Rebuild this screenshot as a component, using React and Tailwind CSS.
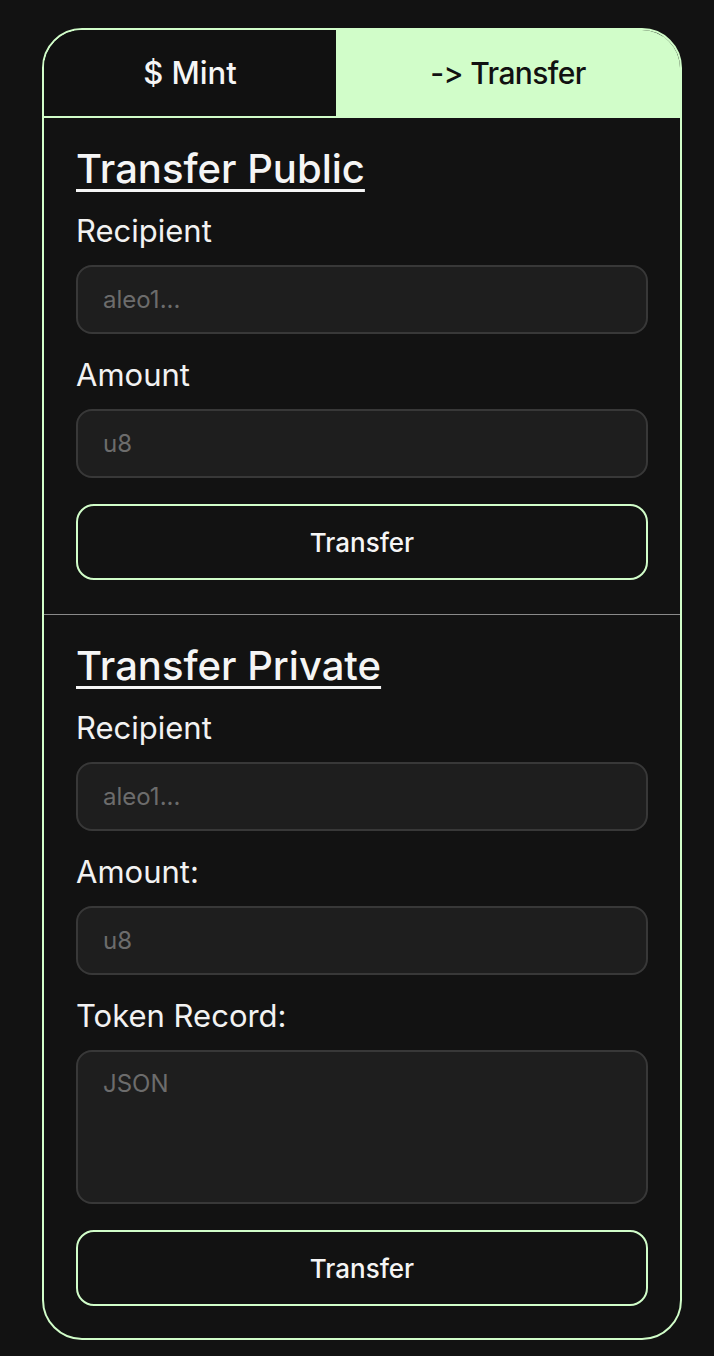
import React from "react";

const font = { fontFamily: "Inter, 'Liberation Sans', sans-serif", fontFeatureSettings: "'calt' 0" };

function Field({ label, placeholder, first, textarea }) {
  return (
    <>
      <label className={`block text-[31px] leading-[36px] text-[#f2f2f2] ${first ? "mt-[18px]" : "mt-[23px]"} mb-[16px]`}>
        {label}
      </label>
      {textarea ? (
        <textarea
          placeholder={placeholder}
          className="block w-full h-[154px] resize-none rounded-[16px] border-2 border-[#383838] bg-[#1e1e1e] px-[25px] py-[16px] text-[24px] leading-[32px] text-[#f2f2f2] placeholder:text-[#6c6c6c] outline-none"
          style={font}
        />
      ) : (
        <input
          placeholder={placeholder}
          className="block w-full h-[69px] rounded-[16px] border-2 border-[#383838] bg-[#1e1e1e] px-[25px] text-[24px] text-[#f2f2f2] placeholder:text-[#6c6c6c] outline-none"
          style={font}
        />
      )}
    </>
  );
}

function Button() {
  return (
    <button className="mt-[26px] block w-full h-[76px] rounded-[18px] border-2 border-[#d1fdc9] bg-transparent text-[26px] font-medium text-[#f5f5f5]" style={font}>
      Transfer
    </button>
  );
}

export default function App() {
  return (
    <div className="min-h-[1356px] bg-[#121212] pt-[28px] pl-[42px]" style={font}>
      <div className="w-[640px] rounded-[40px] border-2 border-[#d1fdc9] overflow-hidden bg-[#121212]">
        <div className="flex h-[88px] border-b-2 border-[#d1fdc9]">
          <div className="w-[292px] flex items-center justify-center bg-[#111111] text-[31px] font-medium text-[#f5f5f5]">
            $ Mint
          </div>
          <div className="flex-1 flex items-center justify-center bg-[#d1fdc9] text-[30px] tracking-[-0.02em] font-medium text-[#111111]">
            -&gt; Transfer
          </div>
        </div>

        <div className="px-[32px] pt-[25px] pb-[34px]">
          <h2 className="text-[40px] leading-[52px] font-medium text-[#f5f5f5] underline decoration-[3px] underline-offset-[6px]">
            Transfer Public
          </h2>
          <Field label="Recipient" placeholder="aleo1..." first />
          <Field label="Amount" placeholder="u8" />
          <Button />
        </div>

        <div className="h-px bg-[#8a8a8a]" />

        <div className="px-[32px] pt-[25px] pb-[32px]">
          <h2 className="text-[40px] leading-[52px] font-medium text-[#f5f5f5] underline decoration-[3px] underline-offset-[6px]">
            Transfer Private
          </h2>
          <Field label="Recipient" placeholder="aleo1..." first />
          <Field label="Amount:" placeholder="u8" />
          <Field label="Token Record:" placeholder="JSON" textarea />
          <Button />
        </div>
      </div>
    </div>
  );
}
